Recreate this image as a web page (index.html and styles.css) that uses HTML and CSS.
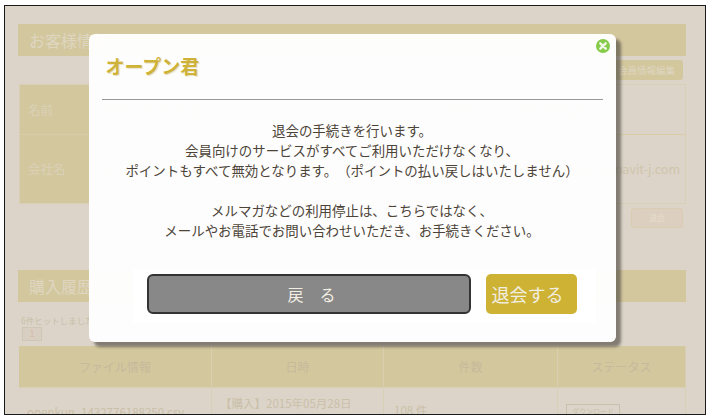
FILE: index.html
```html
<!DOCTYPE html>
<html lang="ja">
<head>
<meta charset="utf-8">
<title>オープン君</title>
<link rel="stylesheet" href="styles.css">
</head>
<body>
<div class="frame">
  <div class="page">
    <h2 class="bar">お客様情報</h2>
    <div class="edit-row"><span class="edit-btn">会員情報編集</span></div>
    <div class="info">
      <div class="info-row r1">
        <div class="info-head">名前</div>
        <div class="info-val name">河内山友行子 様</div>
        <div class="info-mid">保有ポイント</div>
        <div class="info-val pts">187,450 pt</div>
      </div>
      <div class="info-row r2">
        <div class="info-head">会社名</div>
        <div class="info-val company">オープンループ</div>
        <div class="info-mid">メール</div>
        <div class="info-val mail">openkun@navit-j.com</div>
      </div>
    </div>
    <div class="quit-row"><span class="quit-btn">退会</span></div>
    <h2 class="bar second">購入履歴</h2>
    <p class="hits">6件ヒットしました。1件目から表示</p>
    <span class="pager">1</span>
    <div class="grid">
      <div class="th">ファイル情報</div>
      <div class="th">日時</div>
      <div class="th">件数</div>
      <div class="th">ステータス</div>
      <div class="td file">openkun_1432776188250.csv</div>
      <div class="td date">【購入】2015年05月28日</div>
      <div class="td count">108 件</div>
      <div class="td status"><span class="dl">ダウンロード</span></div>
    </div>
  </div>
  <div class="modal">
    <svg class="close" viewBox="0 0 16 16" aria-label="閉じる">
      <circle cx="8" cy="8" r="7" fill="#86cb4a"/>
      <path d="M5.3 5.3l5.4 5.4M10.7 5.3l-5.4 5.4" stroke="#f2f8e8" stroke-width="2.4" stroke-linecap="round"/>
    </svg>
    <h1 class="title">オープン君</h1>
    <hr class="rule">
    <div class="message">
      <p>退会の手続きを行います。<br>会員向けのサービスがすべてご利用いただけなくなり、<br>ポイントもすべて無効となります。（ポイントの払い戻しはいたしません）</p>
      <p>メルマガなどの利用停止は、こちらではなく、<br>メールやお電話でお問い合わせいただき、お手続きください。</p>
    </div>
    <div class="actions">
      <button class="btn back">戻　る</button>
      <button class="btn leave">退会する</button>
    </div>
  </div>
</div>
</body>
</html>
```
FILE: styles.css
```css
* { box-sizing: border-box; }
html, body { margin: 0; background: #fff; }
body {
  width: 710px;
  height: 419px;
  overflow: hidden;
  font-family: "Noto Sans CJK JP", "Noto Sans", sans-serif;
  text-spacing-trim: space-all;
}
.frame {
  position: relative;
  width: 702px;
  height: 410px;
  margin: 5px 0 0 4px;
  border: 1.5px solid #1a1a1a;
  background: #dcd4c8;
  overflow: hidden;
}
.page { padding: 17.5px 19px 0 13px; color: #cfc4ac; font-size: 12px; }
.bar {
  margin: 0;
  height: 32px;
  padding-left: 11px;
  background: #d3c79e;
  color: #ded6c0;
  font-size: 16px;
  font-weight: 400;
  line-height: 32px;
}
.second { margin-top: 42px; }
.edit-row { display: flex; justify-content: flex-end; height: 28px; padding: 4px 3px 0 0; }
.edit-btn {
  width: 73px; height: 20px; border-radius: 3px;
  background: #d3c79e; color: #ded6c0; font-size: 9.5px; line-height: 20px; text-align: center;
}
.info { margin-left: 1px; border: 1px solid #d9cfb6; }
.info-row { display: flex; align-items: stretch; }
.r1 { height: 50px; border-bottom: 1px solid #d8cda8; }
.r2 { height: 68px; }
.info-head { width: 69px; padding-left: 8px; background: #d3c79e; color: #dad1b8; display: flex; align-items: center; font-size: 12.5px; }
.info-val, .info-mid { display: flex; align-items: center; }
.name { width: 355px; padding-left: 14px; font-size: 14px; }
.company { width: 355px; padding-left: 14px; font-size: 12px; }
.info-mid { width: 72px; font-size: 10px; white-space: nowrap; }
.pts { flex: 1; font-size: 14px; white-space: nowrap; }
.mail { flex: 1; min-width: 0; font-size: 12.5px; justify-content: flex-end; padding-right: 5px; white-space: nowrap; }
.quit-row { display: flex; justify-content: flex-end; height: 24px; padding: 4px 3px 0 0; }
.quit-btn {
  width: 52px; height: 20px; border-radius: 3px; border: 1px solid #d8cdb0;
  background: #ddcfc0; color: #e4decb; font-size: 8px; line-height: 18px; text-align: center;
}
.hits { margin: 12px 0 0 3px; height: 13px; font-size: 8.5px; line-height: 13px; color: #c9bfab; }
.pager {
  display: block; width: 20px; height: 14px; margin: 0 0 5px 4px;
  border: 1px solid #cfc7b6; background: #d8cfc2; color: #d8b9a4; font-size: 9px; line-height: 12px; text-align: center;
}
.grid {
  display: grid;
  grid-template-columns: 193px 172px 174px 128px;
  grid-template-rows: 42px 40px;
  margin-left: 1px;
}
.th {
  display: flex; align-items: center; justify-content: center;
  background: #d3c79e; border-right: 1px solid #d9cfb0; border-bottom: 1px solid #d9cfb0;
  color: #c5ba9b; font-size: 12px;
}
.td {
  white-space: nowrap;
  border-right: 1px solid #d9cfb6; color: #cabfa9; font-size: 11.5px; line-height: 16px;
}
.file { padding: 16px 0 0 8px; }
.date { padding: 7px 0 0 8px; }
.count { padding: 14px 0 0 10px; }
.status { padding: 16px 0 0 8px; }
.dl { display: block; width: 54px; border: 1px solid #c9c0ae; font-size: 7px; line-height: 12px; text-align: center; }
.modal {
  position: absolute;
  left: 83.5px;
  top: 27.5px;
  width: 527px;
  height: 308px;
  padding: 0 13px;
  border-radius: 6px;
  background: rgba(255, 255, 255, 0.955);
  box-shadow: 5px 5px 3px rgba(75, 70, 62, 0.62);
}
.close { position: absolute; right: 5px; top: 4px; width: 16px; height: 16px; }
.title {
  margin: 0;
  padding: 18px 0 0 4px;
  height: 65px;
  color: #cfb238;
  font-size: 19px;
  font-weight: 700;
  line-height: 28px;
  text-shadow: 1px 1px 1px #e6e0c4;
}
.rule { margin: 0; height: 1px; border: 0; background: #999; }
.message { padding-top: 20px; height: 169px; color: #4c4438; font-size: 13.45px; line-height: 20px; text-align: center; }
.message p { margin: 0 0 20px; }
.actions {
  display: flex;
  justify-content: flex-start;
  gap: 15px;
  width: 463px;
  height: 54px;
  margin-left: 31px;
  padding: 5px 0 0 14px;
  background: #fff;
}
.btn { height: 40px; font-family: inherit; font-size: 16px; color: #f2eee2; padding: 0; }
.back { width: 324px; padding-left: 6px; border: 2.5px solid #333; border-radius: 6px; background: #888; }
.leave { width: 91px; padding-right: 7px; font-size: 18px; border: 0; border-radius: 5px; background: #cdb234; }
```
